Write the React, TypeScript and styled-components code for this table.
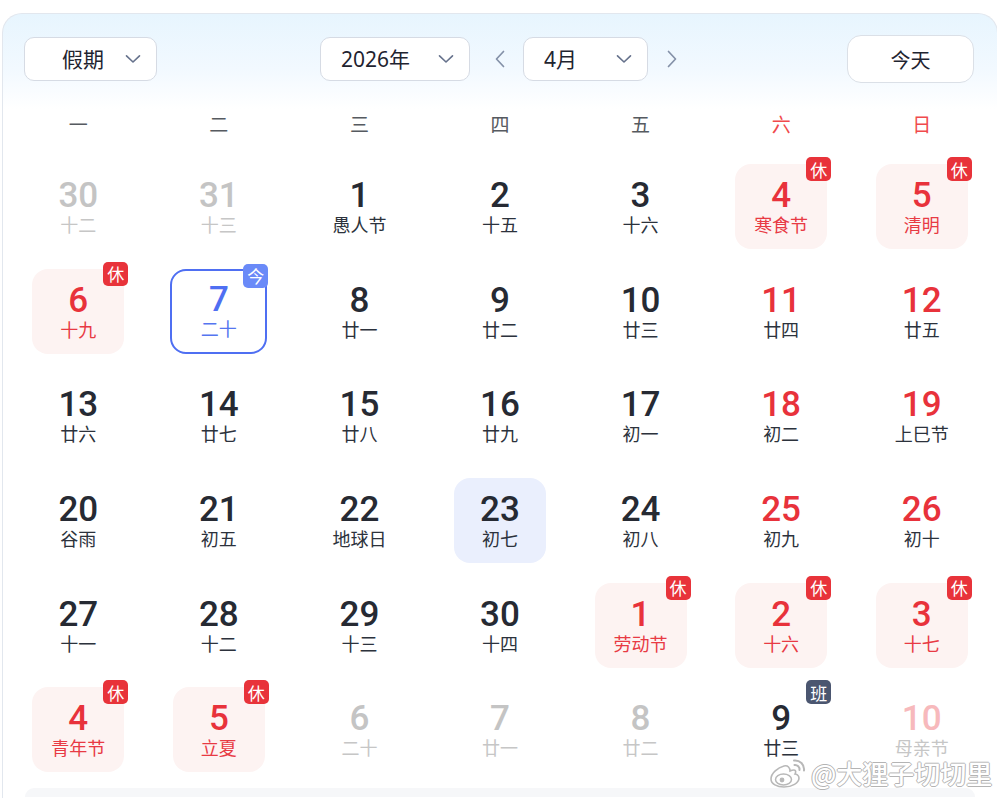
import styled, { createGlobalStyle, css } from "styled-components";

type Day = {
  n: number;
  lunar: string;
  other?: boolean;
  weekend?: boolean;
  holiday?: boolean;
  work?: boolean;
  today?: boolean;
  selected?: boolean;
};

const weekdays = ["一", "二", "三", "四", "五", "六", "日"];

const days: Day[] = [
  { n: 30, lunar: "十二", other: true },
  { n: 31, lunar: "十三", other: true },
  { n: 1, lunar: "愚人节" },
  { n: 2, lunar: "十五" },
  { n: 3, lunar: "十六" },
  { n: 4, lunar: "寒食节", holiday: true },
  { n: 5, lunar: "清明", holiday: true },
  { n: 6, lunar: "十九", holiday: true },
  { n: 7, lunar: "二十", today: true },
  { n: 8, lunar: "廿一" },
  { n: 9, lunar: "廿二" },
  { n: 10, lunar: "廿三" },
  { n: 11, lunar: "廿四", weekend: true },
  { n: 12, lunar: "廿五", weekend: true },
  { n: 13, lunar: "廿六" },
  { n: 14, lunar: "廿七" },
  { n: 15, lunar: "廿八" },
  { n: 16, lunar: "廿九" },
  { n: 17, lunar: "初一" },
  { n: 18, lunar: "初二", weekend: true },
  { n: 19, lunar: "上巳节", weekend: true },
  { n: 20, lunar: "谷雨" },
  { n: 21, lunar: "初五" },
  { n: 22, lunar: "地球日" },
  { n: 23, lunar: "初七", selected: true },
  { n: 24, lunar: "初八" },
  { n: 25, lunar: "初九", weekend: true },
  { n: 26, lunar: "初十", weekend: true },
  { n: 27, lunar: "十一" },
  { n: 28, lunar: "十二" },
  { n: 29, lunar: "十三" },
  { n: 30, lunar: "十四" },
  { n: 1, lunar: "劳动节", holiday: true },
  { n: 2, lunar: "十六", holiday: true },
  { n: 3, lunar: "十七", holiday: true },
  { n: 4, lunar: "青年节", holiday: true },
  { n: 5, lunar: "立夏", holiday: true },
  { n: 6, lunar: "二十", other: true },
  { n: 7, lunar: "廿一", other: true },
  { n: 8, lunar: "廿二", other: true },
  { n: 9, lunar: "廿三", work: true },
  { n: 10, lunar: "母亲节", other: true, weekend: true },
];

const Chevron = () => (
  <svg width="16" height="10" viewBox="0 0 16 10" fill="none">
    <path d="M1.5 1.8 L8 8 L14.5 1.8" stroke="#66728c" strokeWidth="1.6" strokeLinecap="round" strokeLinejoin="round" />
  </svg>
);

const Arrow = ({ dir }: { dir: "left" | "right" }) => (
  <svg width="12" height="18" viewBox="0 0 12 18" fill="none">
    <path
      d={dir === "left" ? "M9.5 1.5 L2.5 9 L9.5 16.5" : "M2.5 1.5 L9.5 9 L2.5 16.5"}
      stroke="#8491a8"
      strokeWidth="1.7"
      strokeLinecap="round"
      strokeLinejoin="round"
    />
  </svg>
);

const WeiboLogo = () => (
  <svg width="38" height="32" viewBox="0 0 38 32" fill="none">
    <path
      d="M15 9c-6 1.5-13 7-13 13 0 5 6 8 13 8 8 0 15-4 15-9 0-3-3-4-4-4 1-2 1-4-1-4-2 0-4 1-4 1 0-3-2-6-6-5z"
      fill="#fff"
      stroke="#b8b8b8"
      strokeWidth="1.6"
    />
    <ellipse cx="14.5" cy="22.5" rx="8" ry="5.5" fill="#fff" stroke="#b8b8b8" strokeWidth="1.5" />
    <circle cx="13" cy="23" r="2.4" fill="#b8b8b8" />
    <path d="M25 3.5a9 9 0 0 1 10 10" stroke="#b8b8b8" strokeWidth="2" strokeLinecap="round" />
    <path d="M25.5 8a4.5 4.5 0 0 1 5 5" stroke="#b8b8b8" strokeWidth="2" strokeLinecap="round" />
  </svg>
);

const App = () => {
  return (
    <>
      <GlobalStyle />
      <Card>
        <Header>
          <Left>
            <Select $w={133} $pl={37}>
              <SelectText>假期</SelectText>
              <Chevron />
            </Select>
          </Left>
          <Middle>
            <Select $w={150} $pl={20}>
              <SelectText>2026年</SelectText>
              <Chevron />
            </Select>
            <NavBtn $ml={20} $mr={13}>
              <Arrow dir="left" />
            </NavBtn>
            <Select $w={125} $pl={20}>
              <SelectText>4月</SelectText>
              <Chevron />
            </Select>
            <NavBtn $ml={14} $mr={0}>
              <Arrow dir="right" />
            </NavBtn>
          </Middle>
          <Right>
            <TodayBtn>今天</TodayBtn>
          </Right>
        </Header>

        <WeekRow>
          {weekdays.map((w, i) => (
            <WeekLabel key={w} $weekend={i >= 5}>
              {w}
            </WeekLabel>
          ))}
        </WeekRow>

        <Grid>
          {days.map((d, i) => (
            <Cell key={i}>
              <DayBox $holiday={d.holiday} $today={d.today} $selected={d.selected}>
                <Num $tone={numTone(d)}>{d.n}</Num>
                <Lunar $tone={lunarTone(d)}>{d.lunar}</Lunar>
                {d.holiday && <Badge $kind="rest">休</Badge>}
                {d.today && <Badge $kind="today">今</Badge>}
                {d.work && <Badge $kind="work">班</Badge>}
              </DayBox>
            </Cell>
          ))}
        </Grid>

        <BottomPanel />

        <Watermark>
          <WeiboLogo />
          <WatermarkText>@大狸子切切里</WatermarkText>
        </Watermark>
      </Card>
    </>
  );
};

type Tone = "dark" | "red" | "gray" | "pink" | "blue";

function numTone(d: Day): Tone {
  if (d.today) return "blue";
  if (d.other && d.weekend) return "pink";
  if (d.other) return "gray";
  if (d.holiday || d.weekend) return "red";
  return "dark";
}

function lunarTone(d: Day): Tone {
  if (d.today) return "blue";
  if (d.other) return "gray";
  if (d.holiday) return "red";
  return "dark";
}

export default App;

const numColors: Record<Tone, string> = {
  dark: "#262a33",
  red: "#e8323b",
  gray: "#c4c4c4",
  pink: "#f7b9bc",
  blue: "#4f6ff2",
};

const lunarColors: Record<Tone, string> = {
  dark: "#2c323c",
  red: "#e83a44",
  gray: "#c6c6c6",
  pink: "#c6c6c6",
  blue: "#5575f0",
};

const GlobalStyle = createGlobalStyle`
  html, body {
    margin: 0;
    padding: 0;
    background: #ffffff;
    overflow: hidden;
  }
  body {
    font-family: "Noto Sans", "Noto Sans CJK SC", sans-serif;
  }
`;

const Card = styled.div`
  position: relative;
  box-sizing: border-box;
  margin: 13px 0 0 2px;
  width: 996px;
  height: 785px;
  border: 1px solid #e2e7ee;
  border-bottom: none;
  border-radius: 20px 20px 0 0;
  padding: 21px 5px 0;
  background: linear-gradient(180deg, #e7f5fe 0px, #f2f9ff 55px, #ffffff 95px);
`;

const Header = styled.div`
  display: grid;
  grid-template-columns: 1fr auto 1fr;
  align-items: center;
  height: 48px;
  padding: 0 18px 0 16px;
`;

const Left = styled.div`
  display: flex;
  align-items: center;
`;

const Middle = styled.div`
  display: flex;
  align-items: center;
  margin-left: 4px;
`;

const Right = styled.div`
  display: flex;
  justify-content: flex-end;
`;

const Select = styled.div<{ $w: number; $pl: number }>`
  box-sizing: border-box;
  display: flex;
  align-items: center;
  justify-content: space-between;
  width: ${(p) => p.$w}px;
  height: 44px;
  padding: 0 15px 0 ${(p) => p.$pl}px;
  background: #ffffff;
  border: 1px solid #d6dbe4;
  border-radius: 10px;
`;

const SelectText = styled.span`
  font-family: "Noto Sans", "Noto Sans CJK SC", sans-serif;
  font-size: 21px;
  color: #1f2430;
  line-height: 1;
`;

const NavBtn = styled.div<{ $ml: number; $mr: number }>`
  display: flex;
  align-items: center;
  justify-content: center;
  width: 20px;
  height: 30px;
  margin-left: ${(p) => p.$ml}px;
  margin-right: ${(p) => p.$mr}px;
`;

const TodayBtn = styled.div`
  box-sizing: border-box;
  display: flex;
  align-items: center;
  justify-content: center;
  width: 127px;
  height: 48px;
  background: #ffffff;
  border: 1px solid #dbe0e7;
  border-radius: 14px;
  font-size: 20px;
  color: #1f2430;
  font-family: "Noto Sans CJK SC", sans-serif;
`;

const WeekRow = styled.div`
  display: grid;
  grid-template-columns: repeat(7, 1fr);
  height: 40px;
  margin-top: 20px;
`;

const WeekLabel = styled.div<{ $weekend: boolean }>`
  display: flex;
  align-items: center;
  justify-content: center;
  font-family: "Noto Sans CJK SC", sans-serif;
  font-size: 19px;
  color: ${(p) => (p.$weekend ? "#f04a4c" : "#565a60")};
`;

const Grid = styled.div`
  display: grid;
  grid-template-columns: repeat(7, 1fr);
  grid-auto-rows: 85px;
  row-gap: 19.7px;
  margin-top: 21px;
`;

const Cell = styled.div`
  display: flex;
  justify-content: center;
`;

const DayBox = styled.div<{ $holiday?: boolean; $today?: boolean; $selected?: boolean }>`
  position: relative;
  box-sizing: border-box;
  display: flex;
  flex-direction: column;
  align-items: center;
  width: 92px;
  height: 85px;
  padding-top: 15px;
  border-radius: 16px;
  ${(p) => p.$holiday && css`background: #fdf3f2;`}
  ${(p) => p.$selected && css`background: #eaeffd;`}
  ${(p) =>
    p.$today &&
    css`
      width: 97px;
      padding-top: 12.5px;
      border: 2.5px solid #4f6ff2;
    `}
`;

const Num = styled.div<{ $tone: Tone }>`
  font-family: Roboto, "Noto Sans", sans-serif;
  font-weight: 500;
  font-size: 35px;
  line-height: 34px;
  color: ${(p) => numColors[p.$tone]};
`;

const Lunar = styled.div<{ $tone: Tone }>`
  font-family: "Noto Sans CJK SC", sans-serif;
  font-size: 18px;
  line-height: 22px;
  color: ${(p) => lunarColors[p.$tone]};
`;

const badgeBg = { rest: "#e8333a", today: "#6a8af8", work: "#4b5670" };

const Badge = styled.div<{ $kind: "rest" | "today" | "work" }>`
  position: absolute;
  top: -7px;
  right: ${(p) => (p.$kind === "today" ? "-3px" : "-4px")};
  width: 25px;
  height: 24px;
  display: flex;
  align-items: center;
  justify-content: center;
  border-radius: 5px;
  background: ${(p) => badgeBg[p.$kind]};
  color: #ffffff;
  font-family: "Noto Sans CJK SC", sans-serif;
  font-size: 17px;
  line-height: 1;
`;

const BottomPanel = styled.div`
  height: 9px;
  margin: 16px 17px 0 17px;
  border-radius: 16px 16px 0 0;
  background: #f6f7f9;
`;

const Watermark = styled.div`
  position: absolute;
  left: 766px;
  top: 743px;
  display: flex;
  align-items: center;
  gap: 4px;
  white-space: nowrap;
`;

const WatermarkText = styled.span`
  font-family: "Noto Sans CJK SC", sans-serif;
  font-size: 26px;
  font-weight: 500;
  line-height: 22px;
  color: #ffffff;
  text-shadow: 1px 0 0 #b4b4b4, -1px 0 0 #b4b4b4, 0 1px 0 #b4b4b4, 0 -1px 0 #b4b4b4;
`;
